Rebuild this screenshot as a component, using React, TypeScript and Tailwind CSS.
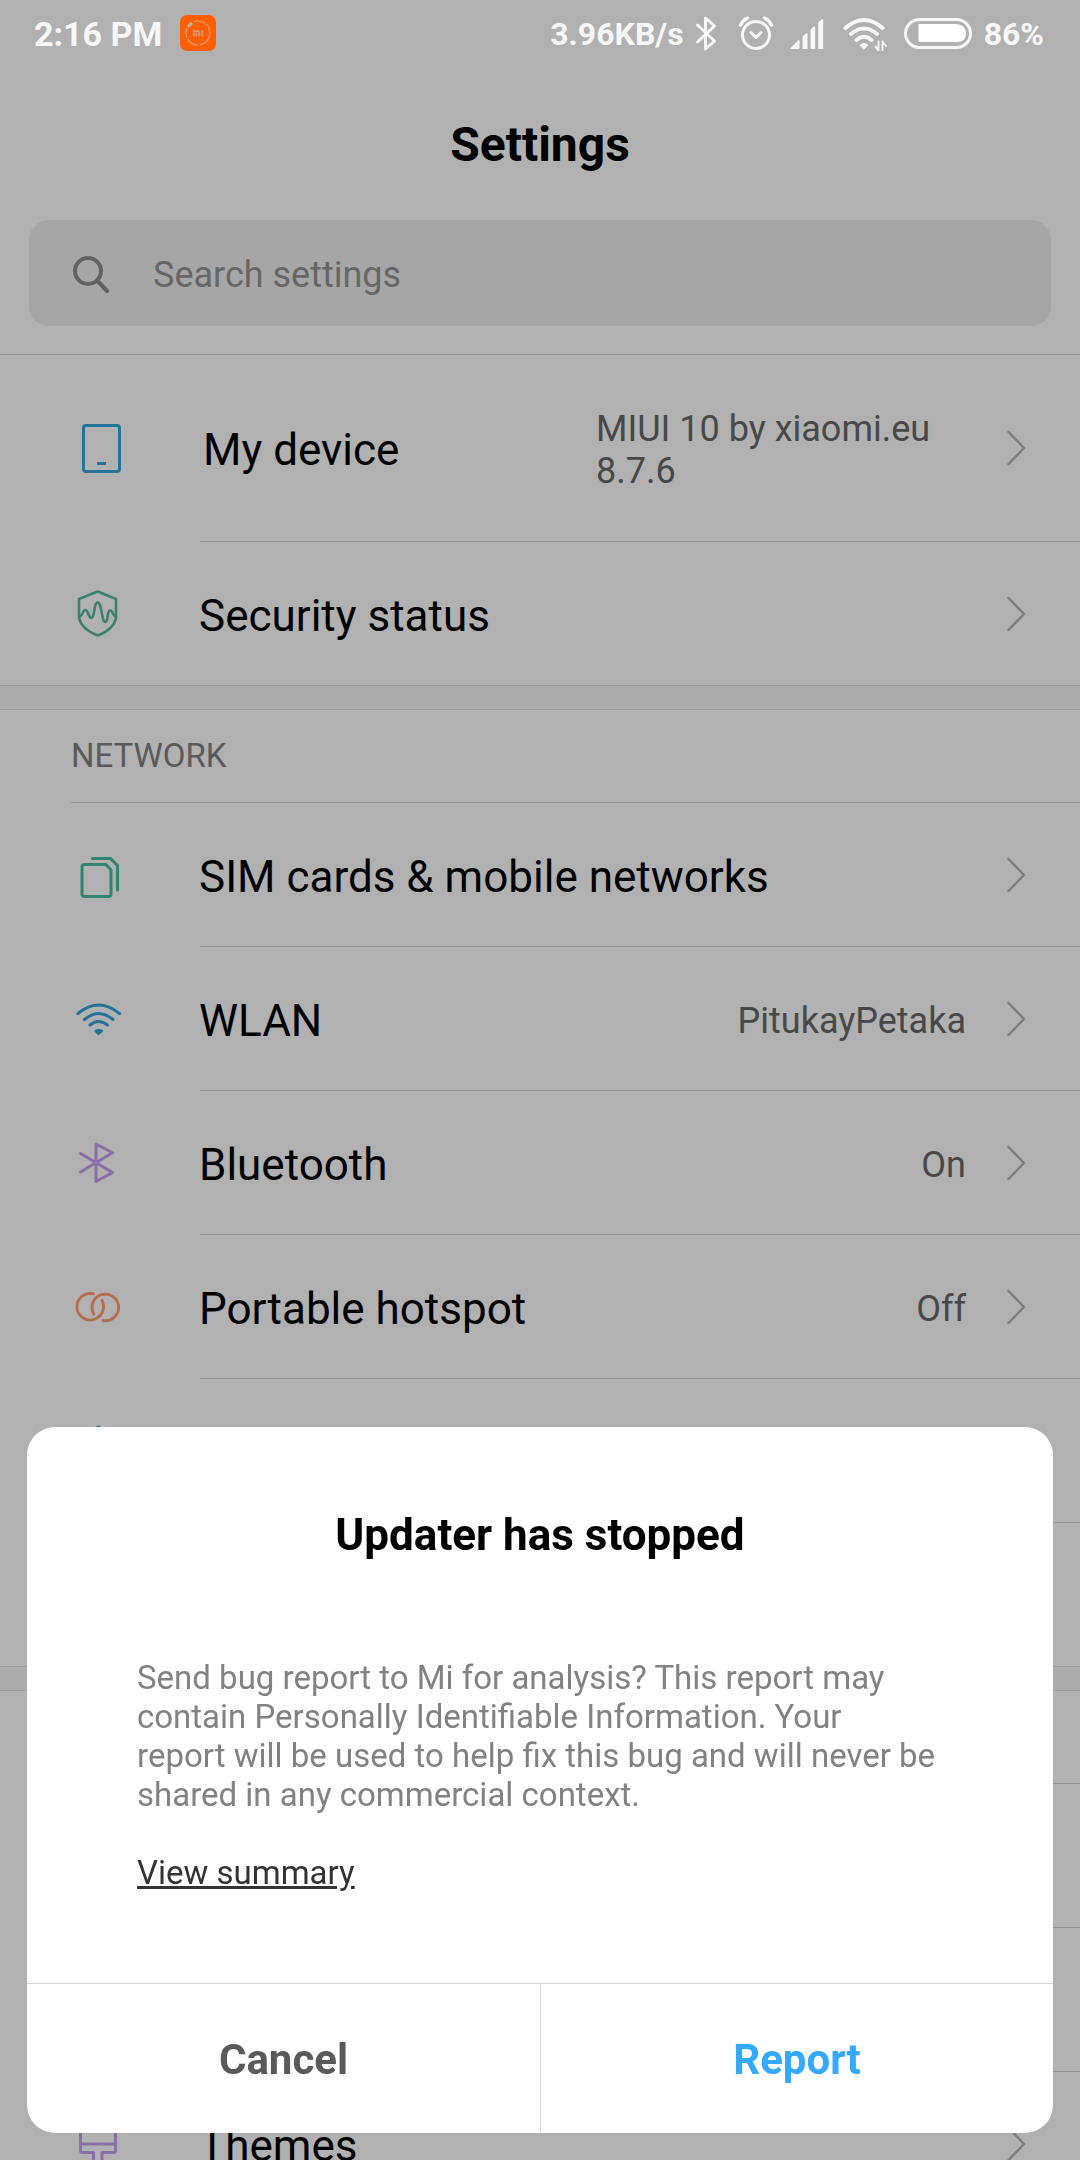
import type { ReactNode } from 'react'

const strokeProps = {
    fill: 'none',
    stroke: 'currentColor',
    strokeWidth: 3,
    strokeLinecap: 'round',
    strokeLinejoin: 'round',
} as const

function RowIcon({ className, children }: { className: string; children?: ReactNode }) {
    return (
        <svg viewBox="0 0 61 61" className={`w-[61px] h-[61px] shrink-0 ${className}`} {...strokeProps} aria-hidden="true">
            {children}
        </svg>
    )
}

function Chevron() {
    return (
        <svg viewBox="0 0 20 36" className="w-5 h-9 shrink-0 text-[#7d7d7d]" {...strokeProps} strokeWidth={2.5} aria-hidden="true">
            <path d="M2.5 2 18 18 2.5 34" />
        </svg>
    )
}

type RowProps = {
    icon?: ReactNode
    label?: string
    value?: string
    tall?: boolean
    last?: boolean
}

function Row({ icon, label, value, tall, last }: RowProps) {
    return (
        <li>
            <button
                type="button"
                aria-label={label ? undefined : 'Setting'}
                className={`flex w-full items-center pr-[54px] text-left ${tall ? 'h-[186px] pl-[72px]' : 'h-[143px] pl-[68px]'}`}
            >
                {icon || <RowIcon className="" />}
                <span className="ml-[70px] flex-1 pt-1 text-[44px] leading-[52px] text-black">{label}</span>
                {value && (
                    <span className={`pt-1 text-[36px] leading-[42px] text-[#484848] ${tall ? 'w-[370px]' : ''}`}>{value}</span>
                )}
                <span className="ml-10"><Chevron /></span>
            </button>
            <div className={last ? 'h-px bg-[#9c9c9c]' : 'ml-[200px] h-px bg-[#949494]'} />
        </li>
    )
}

function Band() {
    return <div className="h-6 border-b border-[#9c9c9c] bg-[#ababab]" />
}

function StatusBar() {
    return (
        <div className="flex h-[66px] items-center pl-[34px] pr-9 text-[32px] font-bold leading-10 text-[#f7f7f7]">
            <span className="pt-0.5 text-[34px]">2:16 PM</span>
            {/* Mi notification */}
            <svg viewBox="0 0 36 36" className="ml-[18px] h-9 w-9" aria-hidden="true">
                <rect width="36" height="36" rx="7" fill="#ff5f00" />
                <circle cx="18" cy="18" r="12" fill="none" stroke="#d8a080" strokeWidth="1.2" strokeDasharray="17 2 12 1.5" />
                <path d="M5.5 11.5 11 6.5" stroke="#ff5f00" strokeWidth="7" />
                <path d="M7.8 11.8 12 7.8" stroke="#bdb0a8" strokeWidth="3" />
                <path d="M13.8 21.2v-5.2h4.200q1 0 1 1v4.200M16.400 18v3.200M22 15.300v5.900" fill="none" stroke="#c8a890" strokeWidth="1.5" />
            </svg>

            <span className="ml-auto pt-0.5">3.96KB/s</span>
            <svg viewBox="0 0 24 36" className="ml-2.5 h-9 w-6" {...strokeProps} aria-hidden="true">
                <path d="M3.5 10 20.5 26 11.5 34V3L20.5 11 3.5 27" />
            </svg>
            <svg viewBox="0 0 36 36" className="ml-5 h-9 w-9" {...strokeProps} aria-hidden="true">
                <circle cx="18" cy="20" r="13.5" />
                <path d="M13 17.5 18 22.5 23 17.5" />
                <path d="M2.5 10Q5 5 9.5 3M33.5 10Q31 5 26.5 3" strokeWidth="3.5" />
            </svg>
            <svg viewBox="0 0 34 36" className="ml-4 h-9 w-[34px]" fill="currentColor" aria-hidden="true">
                <path d="M.5 33 8 25.5Q9.5 24.5 9.5 26V33Q9.5 34 8.5 34H1.5Q0 34 .5 33Z" />
                <path d="M12.5 21.5 16 18.5Q17.500 17.500 17.500 19V34H12.500Z" />
                <path d="M20.500 14.500 23.500 11.800Q25.200 10.800 25.200 12.500V34H20.500Z" />
                <path d="M28.200 7.500 31.500 4.500Q33.200 3.500 33.200 5.500V34H28.200Z" />
            </svg>
            <svg viewBox="0 0 46 36" className="ml-[18px] h-9 w-[46px]" {...strokeProps} aria-hidden="true">
                <path d="M3.5 13Q22 -3 40.5 13M9 19Q22 8 35 19M14.5 25Q22 18.5 29.5 25" strokeWidth="4" />
                <path d="M18 30Q22 27 26 30L22 34Z" fill="currentColor" strokeWidth="1" />
                <path d="M36.5 26.5V36M36.5 36 33.5 31.5M40.5 36V26.5L44 31" strokeWidth="1.8" />
            </svg>
            <svg viewBox="0 0 68 36" className="ml-4 h-9 w-[68px]" aria-hidden="true">
                <rect x="1.5" y="4.5" width="65" height="28" rx="14" fill="none" stroke="currentColor" strokeWidth="3" />
                <path d="M14.5 9H53Q62 10 62 18.5T53 27H14.5Z" fill="white" />
            </svg>
            <span className="ml-3 pt-0.5">86%</span>
        </div>
    )
}

export default function App() {
    return (
        <div className="h-screen overflow-hidden bg-[#b1b1b1] font-[Roboto,sans-serif]">
            <StatusBar />

            {/* Header */}
            <header className="border-b border-[#949494] px-[29px] pb-7">
                <h1 className="pt-[51px] text-center text-[48px] font-bold leading-[56px] text-black">Settings</h1>
                <label className="mt-[47px] flex h-[106px] items-center rounded-[20px] bg-[#a6a6a6] pl-11 pr-8 pt-1 text-[#626262]">
                    <svg viewBox="0 0 36 38" className="h-[38px] w-9 shrink-0" {...strokeProps} strokeWidth={4} aria-hidden="true">
                        <circle cx="15" cy="15" r="13" />
                        <path d="M24.5 25 34 35" />
                    </svg>
                    <input
                        type="search"
                        aria-label="Search settings"
                        placeholder="Search settings"
                        className="ml-11 min-w-0 flex-1 bg-transparent text-[36px] leading-[42px] outline-none placeholder:text-[#666666]"
                    />
                </label>
            </header>

            <main>
                <ul>
                    <Row
                        tall
                        label="My device"
                        value="MIUI 10 by xiaomi.eu 8.7.6"
                        icon={
                            <RowIcon className="text-[#24739a]">
                                <rect x="11.5" y="7.5" width="36" height="46" rx="2.5" />
                                <path d="M25 45.5h9" strokeLinecap="butt" />
                            </RowIcon>
                        }
                    />
                    <Row
                        last
                        label="Security status"
                        icon={
                            <RowIcon className="text-[#3b826e]">
                                <g strokeWidth="2.6">
                                    <path d="M29.7 8.5 48 16V35Q46 46 29.7 52.5 13.5 46 11 35V16Z" />
                                    <path d="M11.5 33C14.5 34 14.5 27 17.5 27S20 35 23.5 35 25.5 19.5 29.7 19.5 33.5 39 37.2 39 38.5 27.5 42 27.5 44.5 33 47.5 33" />
                                </g>
                            </RowIcon>
                        }
                    />
                </ul>

                <Band />

                <h2 className="flex h-[92px] items-center pl-[71px] text-[33px] leading-10 text-[#5a5a5a]">NETWORK</h2>
                <div className="ml-[71px] h-px bg-[#949494]" />
                <ul>
                    <Row
                        label="SIM cards &amp; mobile networks"
                        icon={
                            <RowIcon className="text-[#308472]">
                                <path d="M17 20.5H38L43 26V50Q43 52.5 40.5 52.5H16.5Q14 52.5 14 50V22.5Q14 20.5 17 20.5Z" />
                                <path d="M24.5 14.500H42.5L49.5 21.500V46" />
                            </RowIcon>
                        }
                    />
                    <Row
                        label="WLAN"
                        value="PitukayPetaka"
                        icon={
                            <RowIcon className="text-[#24719a]">
                                <path d="M10 25.5Q30.5 8.5 51.5 25.5M16.5 31.5Q30.5 19.5 45 31.5M22 37Q30.5 30 39.5 37" />
                                <path d="M27 43Q30.5 40.5 34.5 43L30.5 46.5Z" fill="currentColor" strokeWidth="1.5" />
                            </RowIcon>
                        }
                    />
                    <Row
                        label="Bluetooth"
                        value="On"
                        icon={
                            <RowIcon className="text-[#8a6ea9]">
                                <path d="M12.5 21.5 44.5 40.5 28 49.5V12L44.5 20.8 12.5 40" />
                            </RowIcon>
                        }
                    />
                    <Row
                        label="Portable hotspot"
                        value="Off"
                        icon={
                            <RowIcon className="text-[#b66c48]">
                                <g strokeWidth="2.8">
                                    <path d="M25.5 17.8A13.3 13.3 0 1 0 34 24.5" />
                                    <path d="M35 44.5A13.3 13.3 0 1 0 25.8 38" />
                                </g>
                            </RowIcon>
                        }
                    />
                    <Row
                        icon={
                            <RowIcon className="text-[#24739a]">
                                <path d="M30.5 7 50 18V43L30.5 54 11 43V18Z" />
                            </RowIcon>
                        }
                    />
                    <Row last />
                </ul>

                <Band />

                <div className="h-[92px]" />
                <div className="ml-[71px] h-px bg-[#949494]" />
                <ul>
                    <Row />
                    <Row />
                    <Row
                        label="Themes"
                        icon={
                            <RowIcon className="text-[#8a6ea9]">
                                <path d="M12.5 8V37.5Q12.5 39.5 14.5 39.5H25.5V56H34V39.5H45Q47.500 39.5 47.500 37.5V8Z" />
                                <path d="M12.5 31H47.5" />
                            </RowIcon>
                        }
                    />
                </ul>
            </main>

            {/* Crash dialog */}
            <div
                role="dialog"
                aria-labelledby="dialog-title"
                className="fixed inset-x-[27px] bottom-[27px] overflow-hidden rounded-[28px] bg-white"
            >
                <h2 id="dialog-title" className="pt-[81px] text-center text-[44px] font-bold leading-[54px] text-black">Updater has stopped</h2>
                <div className="px-[110px] pb-[91px] pt-24 text-[33px] leading-[39px]">
                    <p className="text-[#828282]">
                        Send bug report to Mi for analysis? This report may contain Personally Identifiable Information. Your
                        <br />
                        report will be used to help fix this bug and will never be shared in any commercial context.
                    </p>
                    <a href="#" className="mt-[39px] block w-fit text-[#333333] underline">View summary</a>
                </div>
                <div className="grid grid-cols-2 border-t border-[#d8d8d8] text-[42px] font-bold leading-[49px]">
                    <button type="button" className="pb-[49px] pt-[51px] text-[#5a5a5a]">Cancel</button>
                    <button type="button" className="border-l border-[#d8d8d8] pb-[49px] pt-[51px] text-[#33a9ff]">Report</button>
                </div>
            </div>
        </div>
    )
}
